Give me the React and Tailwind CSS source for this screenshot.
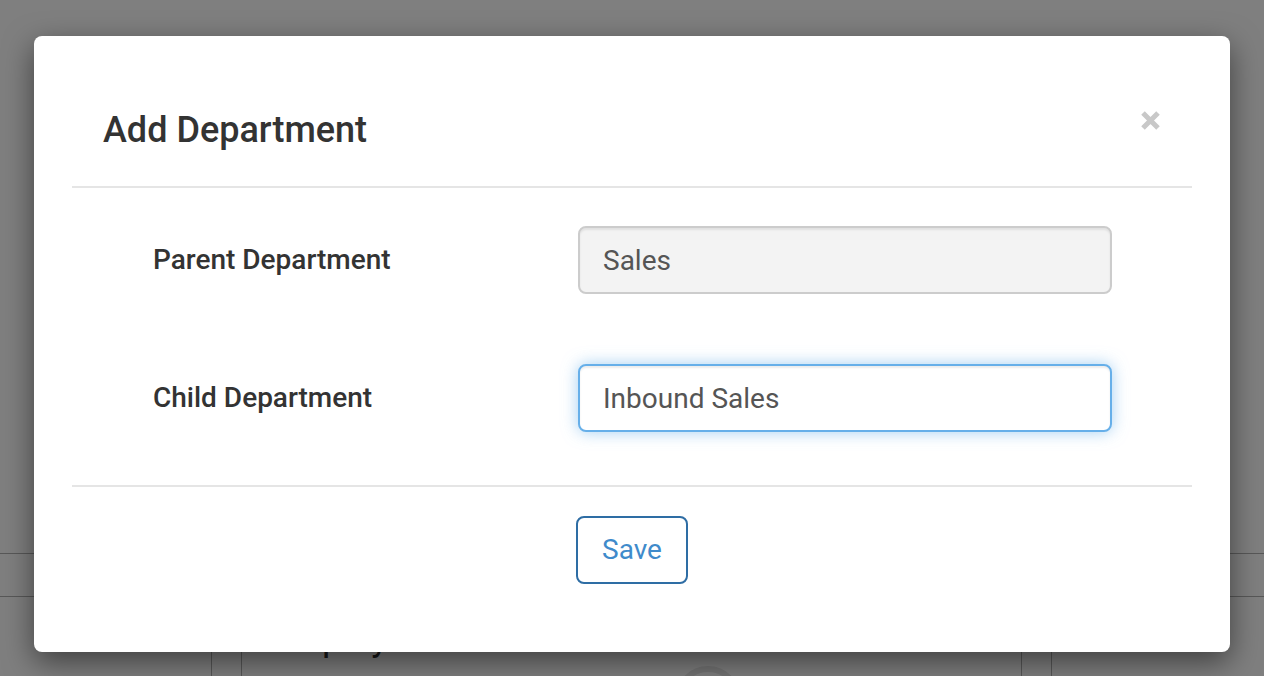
import { useState } from "react";

function CloseIcon() {
    return (
        <svg width="19" height="19" viewBox="0 0 19 19" className="mt-[5px]">
            <path d="M2 2 L17 17 M17 2 L2 17" stroke="#c8c8c8" strokeWidth="5" strokeLinecap="butt" />
        </svg>
    );
}

// page behind the dialog, only the bottom strip shows
function BackgroundPage() {
    return (
        <div className="h-[676px] bg-white flex flex-col overflow-hidden">
            <div className="h-[553px] shrink-0"></div>
            <div className="h-[43px] shrink-0 border-t border-[#b0b0b0]"></div>
            <div className="h-[200px] shrink-0 border-t border-[#b0b0b0] grid grid-cols-[212px_29px_781px_29px_1fr]">
                <div className="border-r border-[#b0b0b0]"></div>
                <div></div>
                <div className="border-x border-[#b0b0b0] pl-[28px] pt-[20px]">
                    <h2 className="text-[36px] leading-[43px] text-[#333]">Employees</h2>
                    <div className="ml-[405px] mt-[6px] w-[66px] h-[66px] rounded-full border-[6px] border-[#e8e8e8]"></div>
                </div>
                <div></div>
                <div className="border-l border-[#b0b0b0] pl-[30px] pt-[20px]">
                    <h2 className="text-[36px] leading-[43px] text-[#333]">Sales</h2>
                </div>
            </div>
        </div>
    );
}

export default function App() {
    const [parent] = useState("Sales");
    const [child, setChild] = useState("Inbound Sales");

    return (
        <div className="relative h-[676px] overflow-hidden font-[Roboto,sans-serif]">
            <BackgroundPage />
            <div className="absolute inset-0 bg-black/50">
                <div className="absolute left-[34px] top-[36px] w-[1196px] bg-white rounded-[8px] px-[38px] shadow-[0_10px_30px_rgba(0,0,0,0.5)]">
                    {/* header */}
                    <div className="flex justify-between items-start pl-[31px] pr-[32px] pt-[70px] pb-[32px] border-b-2 border-[#e5e5e5]">
                        <h4 className="text-[36px] leading-[48px] font-medium text-[#333]">Add Department</h4>
                        <button className="leading-none"><CloseIcon /></button>
                    </div>

                    {/* body */}
                    <div className="pt-[38px] pb-[53px] flex flex-col gap-[70px]">
                        <div className="flex items-center h-[68px]">
                            <label className="w-[506px] pl-[81px] text-[28px] font-medium text-[#333]">Parent Department</label>
                            <input
                                value={parent}
                                disabled
                                className="w-[534px] h-[68px] rounded-[8px] border-2 border-[#cccccc] bg-[#f3f3f3] px-[23px] text-[28px] text-[#555] shadow-[inset_0_2px_2px_rgba(0,0,0,0.075)] outline-none"
                            />
                        </div>
                        <div className="flex items-center h-[68px]">
                            <label className="w-[506px] pl-[81px] text-[28px] font-medium text-[#333]">Child Department</label>
                            <input
                                value={child}
                                onChange={(e) => setChild(e.target.value)}
                                className="w-[534px] h-[68px] rounded-[8px] border-2 border-[#66afe9] bg-white px-[23px] text-[28px] text-[#555] shadow-[inset_0_2px_2px_rgba(0,0,0,0.075),0_0_16px_rgba(102,175,233,0.6)] outline-none"
                            />
                        </div>
                    </div>

                    {/* footer */}
                    <div className="border-t-2 border-[#e5e5e5] pt-[29px] pb-[68px] flex justify-center">
                        <button className="w-[112px] h-[68px] rounded-[8px] border-2 border-[#2e6da4] text-[28px] text-[#3f8bcb] bg-white">
                            Save
                        </button>
                    </div>
                </div>
            </div>
        </div>
    );
}
